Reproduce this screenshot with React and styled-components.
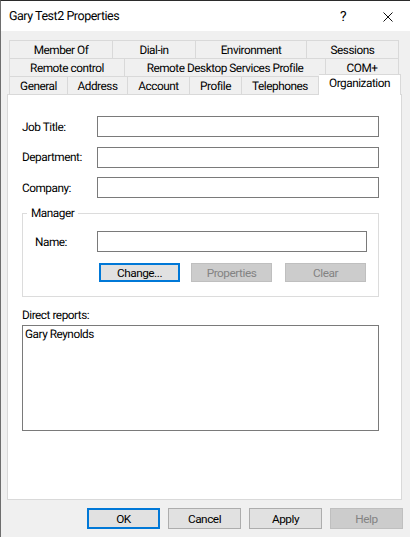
import React from "react";
import styled, { createGlobalStyle } from "styled-components";

const Global = createGlobalStyle`
  html, body { margin: 0; padding: 0; background: #f0f0f0; }
  * { box-sizing: border-box; }
`;

const Dialog = styled.div`
  width: 410px; height: 537px; overflow: hidden;
  background: #f0f0f0; color: #000;
  border-top: 1px solid #2b2b2b; border-left: 1px solid #6e6e6e;
  font: 11.8px/16px Roboto, "Open Sans", sans-serif;
  letter-spacing: -0.47px;
  text-rendering: geometricPrecision;
  display: flex; flex-direction: column;
`;
const TitleBar = styled.div`
  height: 30px; flex: none; background: #fff; display: flex; align-items: center;
  padding: 1px 0 0 8px; font-size: 12.5px;
`;
const Title = styled.div` flex: 1; `;
const HelpGlyph = styled.div` width: 43px; font-size: 14px; `;
const CloseBox = styled.div` width: 27px; display: flex; `;

const Body = styled.div`
  flex: 1; padding: 9px 7px 0 6px; display: flex; flex-direction: column;
`;
const TabRow = styled.div`
  display: flex; height: 18px; padding-left: 2px; padding-right: 3px; align-items: stretch;
`;
const Tab = styled.div`
  width: ${p => p.$w}px; flex: none;
  border: 1px solid #d9d9d9; border-left-width: ${p => p.$first ? 1 : 0}px; border-bottom-width: 0;
  background: ${p => p.$active ? "#fff" : "#f0f0f0"};
  display: flex; align-items: center; justify-content: center; white-space: nowrap;
  ${p => p.$active && `
    height: 21px; margin-top: -2px; position: relative; z-index: 1;
    padding-bottom: 4px;
  `}
`;
const Panel = styled.div`
  width: 395px; height: 406px; background: #fff; border: 1px solid #d9d9d9;
  padding: 21px 22px 0 14px; display: flex; flex-direction: column;
`;
const Fields = styled.div` display: flex; flex-direction: column; gap: 9.5px; `;
const FieldRow = styled.label` display: flex; align-items: center; height: 21px; `;
const FieldLabel = styled.span` width: ${p => p.$w || 75}px; flex: none; `;
const Input = styled.div`
  flex: 1; height: 21px; border: 1px solid #7a7a7a; background: #fff;
`;
const Group = styled.fieldset`
  margin: 8px 0 0; padding: 0 11px 0 12px; height: 91px; min-width: 0;
  border: 1px solid #dcdcdc;
  & > legend { padding: 0 4px; margin-left: -8px; line-height: 14px; }
`;
const NameRow = styled(FieldRow)` margin-top: 11px; `;
const Buttons = styled.div`
  display: flex; margin: 11px 0 0 ${p => p.$left}px;
`;
const Button = styled.button`
  width: ${p => p.$w}px; height: ${p => p.$h}px; padding: 0; flex: none;
  margin-left: ${p => p.$ml || 0}px;
  font: inherit; letter-spacing: inherit; color: ${p => p.disabled ? "#838383" : "#000"};
  background: ${p => p.disabled ? "#cccccc" : "#e1e1e1"};
  border: ${p => p.$default ? "2px solid #0078d7" : `1px solid ${p.disabled ? "#bfbfbf" : "#adadad"}`};
`;
const ReportsLabel = styled.div` margin-top: 10px; height: 18px; `;
const Reports = styled.div`
  height: 106px; border: 1px solid #7a7a7a; padding: 0 2px; background: #fff; line-height: 16px;
`;
const Footer = styled.div`
  display: flex; margin-top: 8px; padding-left: 80px;
`;

const Close = () => (
  <svg width="10" height="10" viewBox="0 0 10 10" fill="none" stroke="#111" strokeWidth="1">
    <path d="M0.5 0.5l9 9M9.5 0.5l-9 9" />
  </svg>
);

const rows = [
  [["Member Of", 104], ["Dial-in", 83], ["Environment", 111], ["Sessions", 92]],
  [["Remote control", 116], ["Remote Desktop Services Profile", 201], ["COM+", 73]],
  [["General", 59], ["Address", 60], ["Account", 62], ["Profile", 52], ["Telephones", 77], ["Organization", 82]],
];

export default function App() {
  return (
    <>
      <Global />
      <Dialog>
        <TitleBar>
          <Title>Gary Test2 Properties</Title>
          <HelpGlyph>?</HelpGlyph>
          <CloseBox><Close /></CloseBox>
        </TitleBar>
        <Body>
          {rows.map((r, i) => (
            <TabRow key={i}>
              {r.map(([t, w], j) => (
                <Tab key={t} $w={w} $first={j === 0} $active={t === "Organization"}>{t}</Tab>
              ))}
            </TabRow>
          ))}
          <Panel>
            <Fields>
              <FieldRow><FieldLabel>Job Title:</FieldLabel><Input /></FieldRow>
              <FieldRow><FieldLabel>Department:</FieldLabel><Input /></FieldRow>
              <FieldRow><FieldLabel>Company:</FieldLabel><Input /></FieldRow>
            </Fields>
            <Group>
              <legend>Manager</legend>
              <NameRow>
                <FieldLabel $w={62}>Name:</FieldLabel>
                <Input />
              </NameRow>
              <Buttons $left={64}>
                <Button $w={81} $h={19} $default>Change...</Button>
                <Button $w={81} $h={19} $ml={11} disabled>Properties</Button>
                <Button $w={81} $h={19} $ml={13} disabled>Clear</Button>
              </Buttons>
            </Group>
            <ReportsLabel>Direct reports:</ReportsLabel>
            <Reports>Gary Reynolds</Reports>
          </Panel>
          <Footer>
            <Button $w={73} $h={21} $default>OK</Button>
            <Button $w={73} $h={21} $ml={8}>Cancel</Button>
            <Button $w={73} $h={21} $ml={8}>Apply</Button>
            <Button $w={73} $h={21} $ml={8} disabled>Help</Button>
          </Footer>
        </Body>
      </Dialog>
    </>
  );
}
